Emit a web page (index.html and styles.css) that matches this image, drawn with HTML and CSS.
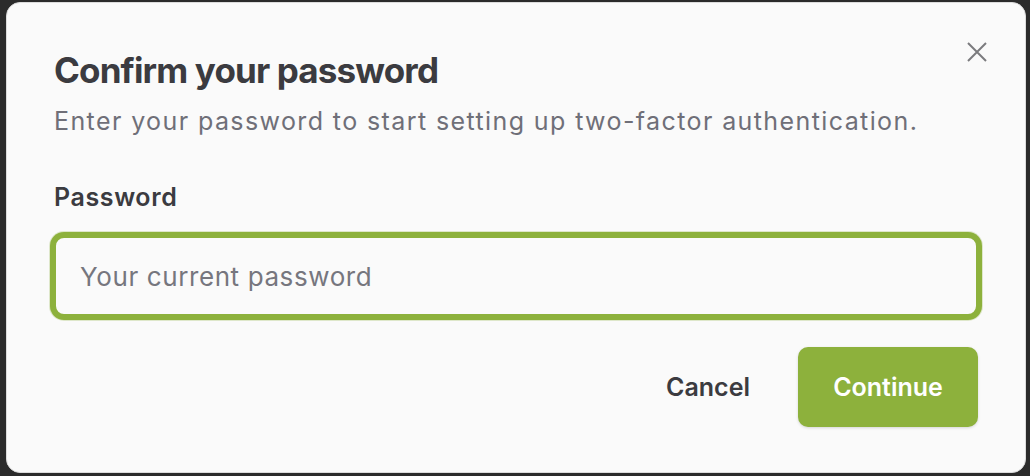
FILE: index.html
```html
<!DOCTYPE html>
<html lang="en">
<head>
<meta charset="utf-8">
<title>Confirm your password</title>
<link rel="stylesheet" href="styles.css">
</head>
<body>
<div class="backdrop">
  <div class="modal" role="dialog" aria-labelledby="t">
    <button class="close" aria-label="Close">
      <svg width="20" height="20" viewBox="0 0 20 20"><path d="M1 1L19 19M19 1L1 19" stroke="#7b7b7e" stroke-width="2" fill="none"/></svg>
    </button>
    <h1 class="title" id="t">Confirm your password</h1>
    <p class="subtitle">Enter your password to start setting up two-factor authentication.</p>
    <label class="label" for="pw">Password</label>
    <input class="input" id="pw" type="password" placeholder="Your current password">
    <div class="actions">
      <button class="btn-cancel">Cancel</button>
      <button class="btn-continue">Continue</button>
    </div>
  </div>
</div>
</body>
</html>
```

FILE: styles.css
```css
* { box-sizing: border-box; }
html, body { margin: 0; padding: 0; }
body {
  width: 1030px;
  height: 476px;
  overflow: hidden;
  background: #2b2b2b;
  font-family: Inter, "Liberation Sans", sans-serif;
}
.backdrop {
  padding: 2px 4px 3px 6px;
  height: 476px;
}
.modal {
  position: relative;
  width: 1020px;
  height: 471px;
  background: #fafafa;
  border: 1px solid #dcdcdc;
  border-radius: 14px;
  padding: 46px 47px 0 47px;
  display: flex;
  flex-direction: column;
}
.close {
  position: absolute;
  top: 39px;
  right: 38px;
  width: 20px;
  height: 20px;
  padding: 0;
  border: 0;
  background: transparent;
  display: flex;
}
.title {
  margin: 0;
  font-size: 35px;
  line-height: 42px;
  font-weight: 700;
  color: #3b3b40;
  letter-spacing: -0.85px;
}
.subtitle {
  margin: 13px 0 0;
  font-size: 25px;
  line-height: 34px;
  font-weight: 400;
  color: #6f6f78;
  letter-spacing: 1.4px;
  white-space: nowrap;
}
.label {
  margin-top: 42px;
  font-size: 25px;
  line-height: 35px;
  font-weight: 600;
  color: #3b3b40;
  letter-spacing: 0.6px;
}
.input {
  margin-top: 21px;
  height: 80px;
  width: 100%;
  border: 2px solid #8db13c;
  border-radius: 10px;
  box-shadow: 0 0 0 4px #8db13c, 0 0 0 5px rgba(141,177,60,0.25);
  background: #fafafa;
  padding: 0 24px;
  font-family: inherit;
  font-size: 26px;
  letter-spacing: 0.6px;
  color: #3b3b40;
  outline: none;
}
.input::placeholder { color: #76767e; }
.actions {
  margin-top: 31px;
  display: flex;
  justify-content: flex-end;
  align-items: center;
  gap: 24px;
}
.btn-cancel {
  height: 80px;
  padding: 0 24px;
  border: 0;
  background: transparent;
  font-family: inherit;
  font-size: 25px;
  font-weight: 600;
  color: #3b3b40;
}
.btn-continue {
  width: 180px;
  height: 80px;
  border: 0;
  border-radius: 10px;
  background: #8db13c;
  color: #ffffff;
  font-family: inherit;
  font-size: 25px;
  font-weight: 600;
  box-shadow: 0 1px 3px rgba(0,0,0,0.15);
}
```
